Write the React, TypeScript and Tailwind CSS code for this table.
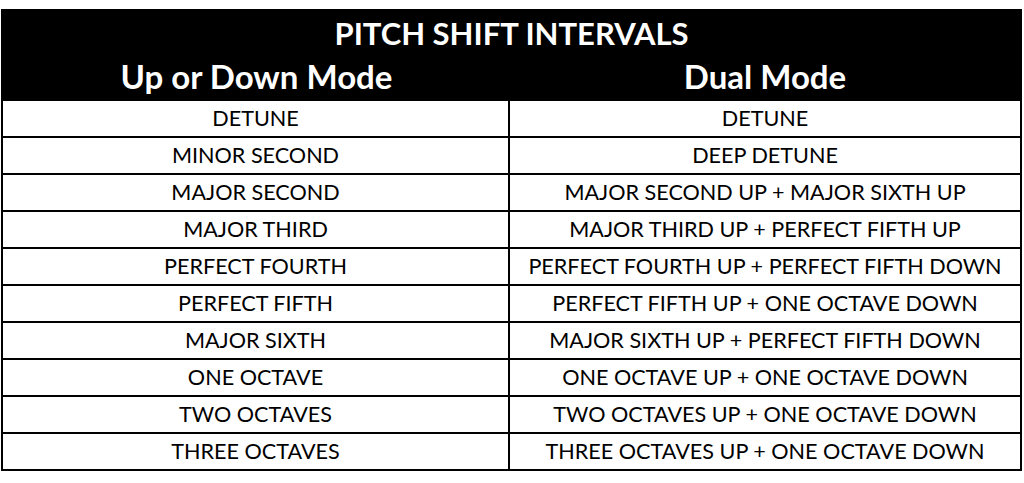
import React from 'react';

// Filas de la tabla de intervalos
const rows: [string, string][] = [
  ['DETUNE', 'DETUNE'],
  ['MINOR SECOND', 'DEEP DETUNE'],
  ['MAJOR SECOND', 'MAJOR SECOND UP + MAJOR SIXTH UP'],
  ['MAJOR THIRD', 'MAJOR THIRD UP + PERFECT FIFTH UP'],
  ['PERFECT FOURTH', 'PERFECT FOURTH UP + PERFECT FIFTH DOWN'],
  ['PERFECT FIFTH', 'PERFECT FIFTH UP + ONE OCTAVE DOWN'],
  ['MAJOR SIXTH', 'MAJOR SIXTH UP + PERFECT FIFTH DOWN'],
  ['ONE OCTAVE', 'ONE OCTAVE UP + ONE OCTAVE DOWN'],
  ['TWO OCTAVES', 'TWO OCTAVES UP + ONE OCTAVE DOWN'],
  ['THREE OCTAVES', 'THREE OCTAVES UP + ONE OCTAVE DOWN'],
];

export default function App() {
  return (
    <div className="h-[483px] w-[1024px] bg-white pl-[1px] pt-[9px] font-['Lato','Open_Sans',sans-serif] text-black">
      <div className="w-[1021px] border-2 border-black">
        {/* Encabezado */}
        <div className="flex h-[88px] flex-col bg-black text-white">
          <div className="flex h-[44px] items-center justify-center pt-[1px] text-[31px] font-bold leading-none">
            PITCH SHIFT INTERVALS
          </div>
          <div className="grid flex-1 grid-cols-[507px_1fr] items-center">
            <div className="pb-[1px] text-center text-[33px] font-bold leading-none">Up or Down Mode</div>
            <div className="pb-[1px] text-center text-[33px] font-bold leading-none">Dual Mode</div>
          </div>
        </div>

        {/* Filas */}
        {rows.map(([left, right]) => (
          <div key={left} className="grid h-[37px] grid-cols-[507px_1fr] border-t-2 border-black text-[21.6px] leading-none">
            <div className="flex items-center justify-center border-r-2 border-black">{left}</div>
            <div className="flex items-center justify-center">{right}</div>
          </div>
        ))}
      </div>
    </div>
  );
}
